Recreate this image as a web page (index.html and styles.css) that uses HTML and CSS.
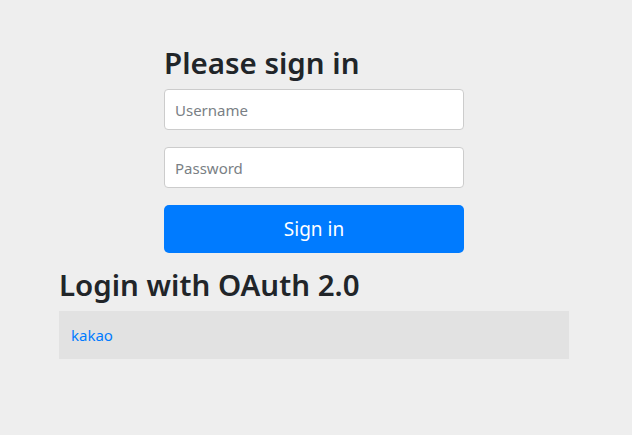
FILE: index.html
```html
<!DOCTYPE html>
<html lang="en">
<head>
<meta charset="utf-8">
<title>Please sign in</title>
<link rel="stylesheet" href="styles.css">
</head>
<body>
<div class="container">
  <form class="form-signin">
    <h2 class="form-signin-heading">Please sign in</h2>
    <p class="field"><input class="form-control" type="text" placeholder="Username"></p>
    <p class="field"><input class="form-control" type="password" placeholder="Password"></p>
    <button class="btn" type="submit">Sign in</button>
  </form>
  <h2 class="oauth-heading">Login with OAuth 2.0</h2>
  <table class="oauth-table">
    <tr><td><a href="#" class="link">kakao</a></td></tr>
  </table>
</div>
</body>
</html>
```
FILE: styles.css
```css
html, body {
  margin: 0;
  padding: 0;
}
body {
  background: #eeeeee;
  font-family: "Noto Sans", "Open Sans", sans-serif;
  color: #212529;
  font-size: 16px;
  line-height: 1.5;
}
.container {
  width: 510px;
  margin-left: 59px;
  padding-top: 45px;
}
.form-signin {
  width: 300px;
  margin-left: 105px;
}
h2 {
  font-size: 29.5px;
  font-weight: 600;
  line-height: 36px;
  margin: 0 0 8px 0;
}
.field {
  margin: 0 0 17px 0;
}
.form-control {
  display: block;
  box-sizing: border-box;
  width: 100%;
  height: 41px;
  padding: 6px 10px;
  font-family: inherit;
  font-size: 15px;
  color: #495057;
  background: #fff;
  border: 1px solid #cccccc;
  border-radius: 4px;
  outline: none;
}
.form-control::placeholder {
  color: #7a7f85;
}
.btn {
  display: block;
  box-sizing: border-box;
  width: 100%;
  height: 48px;
  border: 0;
  border-radius: 5px;
  background: #007bff;
  color: #fff;
  font-family: inherit;
  font-size: 19px;
  cursor: pointer;
}
.oauth-heading {
  margin-top: 14px;
  margin-bottom: 8px;
}
.oauth-table {
  width: 100%;
  border-collapse: collapse;
  background: #e2e2e2;
}
.oauth-table td {
  padding: 12px;
  height: 24px;
}
.link {
  color: #007bff;
  text-decoration: none;
  font-size: 15px;
}
```
